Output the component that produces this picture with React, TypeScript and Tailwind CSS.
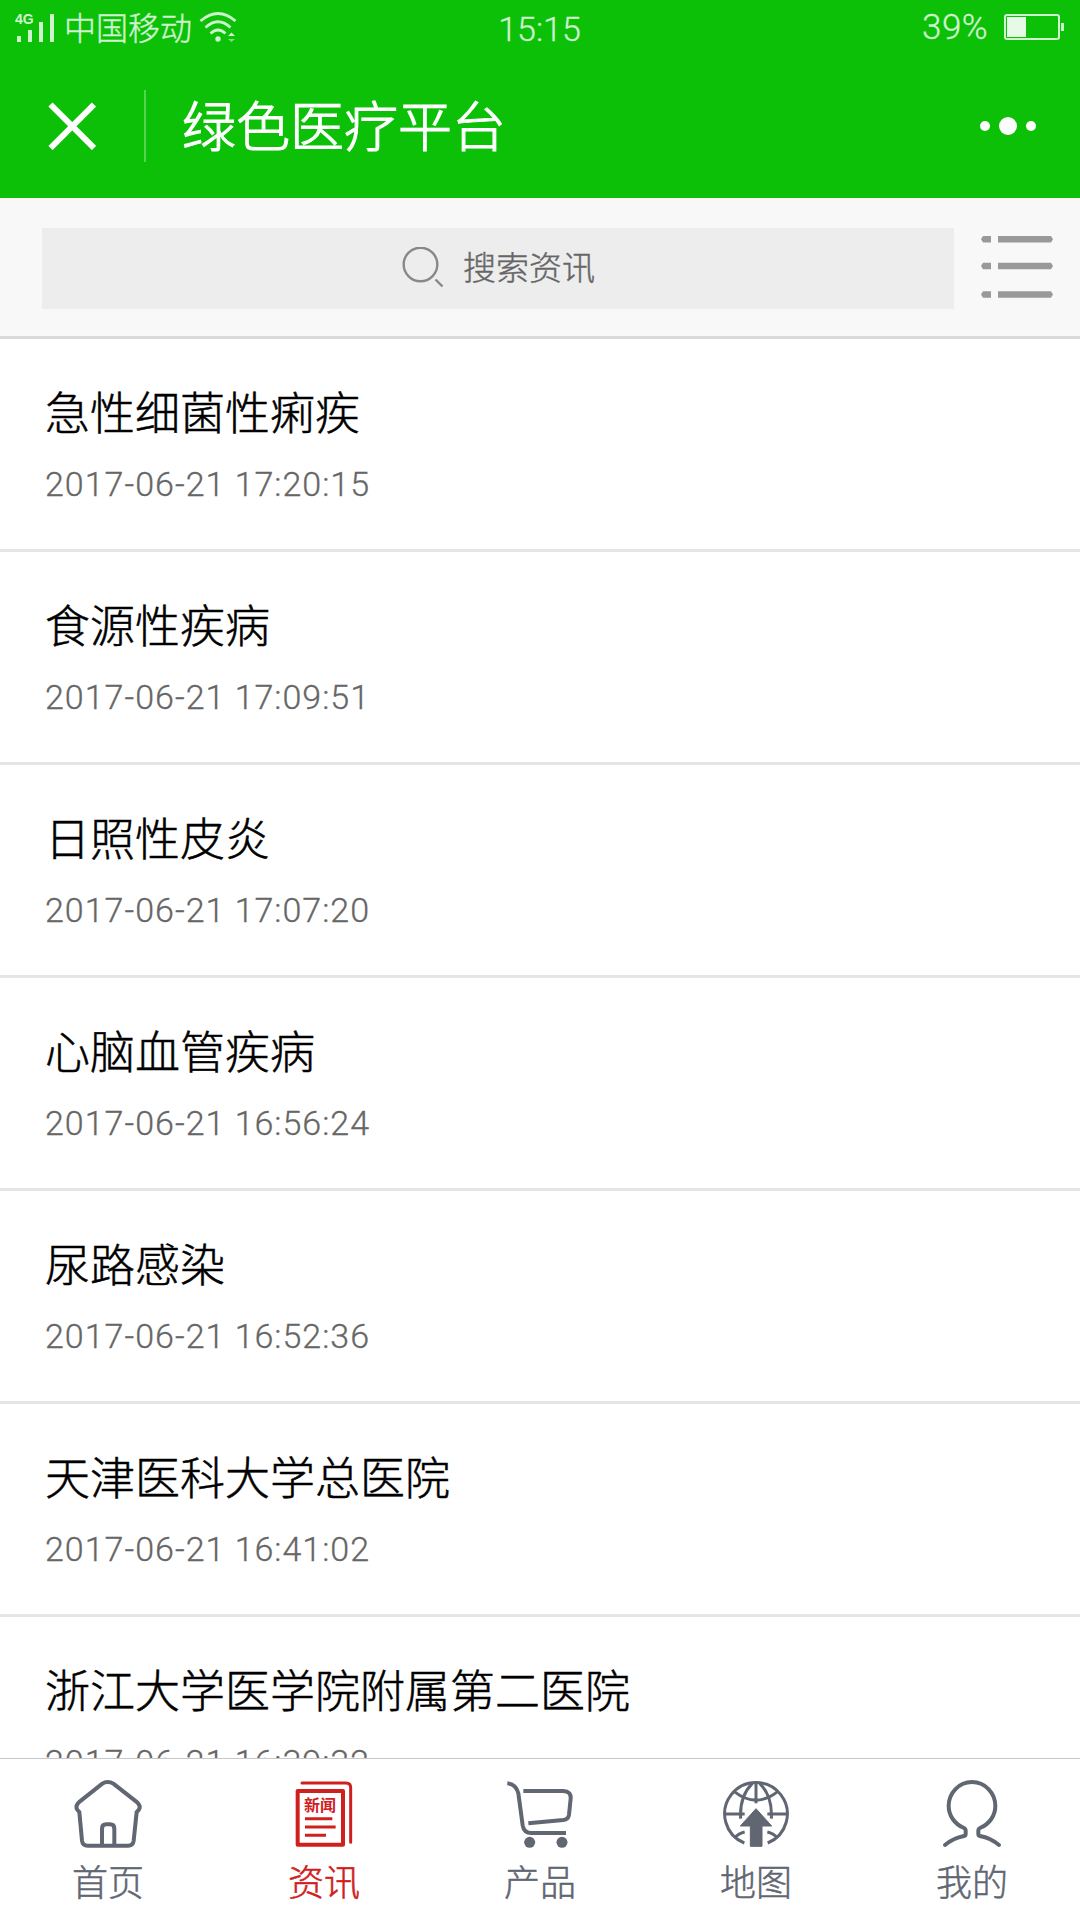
import { useState } from 'react';
import type { ReactNode } from 'react';
import { clsx } from 'clsx';

interface Article {
  title: string;
  date: string;
}

const ARTICLES: Article[] = [
  { title: '急性细菌性痢疾', date: '2017-06-21 17:20:15' },
  { title: '食源性疾病', date: '2017-06-21 17:09:51' },
  { title: '日照性皮炎', date: '2017-06-21 17:07:20' },
  { title: '心脑血管疾病', date: '2017-06-21 16:56:24' },
  { title: '尿路感染', date: '2017-06-21 16:52:36' },
  { title: '天津医科大学总医院', date: '2017-06-21 16:41:02' },
  { title: '浙江大学医学院附属第二医院', date: '2017-06-21 16:39:32' },
];

function TabIcon({ children }: { children: ReactNode }) {
  return (
    <svg
      className="block size-[72px]"
      viewBox="0 0 216 216"
      fill="none"
      stroke="currentColor"
      strokeWidth={12}
      strokeLinejoin="round"
    >
      {children}
    </svg>
  );
}

const TABS = [
  {
    id: 'home',
    label: '首页',
    icon: (
      <TabIcon>
        <path d="M107 12q-9 0-16 5L24 70C10 82 10 92 22 102L30 188Q32 203 47 203H168Q183 203 185 188L194 102C207 92 206 82 192 70L124 17Q116 12 107 12Z" />
        <path d="M90 203V152q0-13 13-13h11q13 0 13 13v51" />
      </TabIcon>
    ),
  },
  {
    id: 'news',
    label: '资讯',
    icon: (
      <TabIcon>
        <rect x="29" y="39" width="136" height="161" strokeWidth={12} />
        <path d="M42 15H174Q188 15 188 29V193" strokeWidth={9} strokeLinecap="round" />
        <path d="M51 122H133M51 147H143M51 172H114" strokeWidth={9} />
        <text
          x="48"
          y="99"
          fontSize="48"
          fontWeight="700"
          fill="currentColor"
          stroke="none"
        >
          新闻
        </text>
      </TabIcon>
    ),
  },
  {
    id: 'products',
    label: '产品',
    icon: (
      <TabIcon>
        <path d="M10 16Q36 18 43 46L56 142Q60 165 82 165H186" strokeWidth={12} />
        <path d="M58 39H178Q202 40 200 62L195 110Q193 124 178 126L73 136" strokeWidth={12} />
        <circle cx="77" cy="193" r="16.5" fill="currentColor" stroke="none" />
        <circle cx="174" cy="193" r="16.5" fill="currentColor" stroke="none" />
      </TabIcon>
    ),
  },
  {
    id: 'map',
    label: '地图',
    icon: (
      <TabIcon>
        <g strokeWidth={9}>
          <path d="M73 195A94 94 0 1 1 143 195" />
          <path d="M15 108H74M142 108H201M108 14V76" />
          <path d="M97 16Q58 55 62 122M119 16Q158 55 154 122" />
          <path d="M43 41Q108 92 173 41" />
          <path d="M43 180Q56 166 74 162M173 180Q160 166 142 162" />
        </g>
        <path
          d="M108 92L61 144H91V205H126V144H155Z"
          fill="currentColor"
          strokeWidth={3}
        />
      </TabIcon>
    ),
  },
  {
    id: 'mine',
    label: '我的',
    icon: (
      <TabIcon>
        <path
          d="M27 201Q52 180 84 174Q89 173 89 167V157Q89 153 84 150C55 138 38 112 38 84A70 72 0 0 1 178 84C178 112 161 138 132 150Q127 153 127 157V167Q127 173 132 174Q164 180 189 201"
          strokeLinecap="round"
        />
      </TabIcon>
    ),
  },
];

function StatusBar() {
  return (
    <div className="flex h-[54px] items-center pl-[15px] pr-4 text-[#d0f3cf]">
      <div className="flex flex-1 items-center">
        <svg className="block h-[32px] w-[42px]" viewBox="0 0 42 32" fill="currentColor">
          <text x="0" y="13" fontSize="14" fontWeight="700" fontFamily="Liberation Sans, sans-serif">
            4G
          </text>
          <path d="M2 25h4v6H2zM13 19h4v12h-4zM24 11h4v20h-4zM35 3h4v28h-4z" />
        </svg>
        <span className="ml-[7px] pb-[3px] text-[32px] leading-none font-light [-webkit-text-stroke:0.4px_currentColor]">
          中国移动
        </span>
        <svg
          className="ml-[7px] block h-[32px] w-[40px]"
          viewBox="0 0 40 32"
          fill="none"
          stroke="currentColor"
          strokeWidth={2.8}
        >
          <path d="M1.5 10Q19 -5 36.500 10M6.500 16.500Q19 5 31.500 16.500M11.500 22.500Q19 15.500 26.500 22.500" />
          <circle cx="19" cy="28" r="2.700" fill="currentColor" stroke="none" />
          <path d="M29 25l3.500-3.500L36 25z" fill="currentColor" stroke="none" />
          <path d="M29 28l3.500 3L36 28z" fill="currentColor" stroke="none" opacity={0.6} />
        </svg>
      </div>
      <span className="pt-[4px] font-['Roboto'] text-[34px] leading-none font-light [-webkit-text-stroke:0.3px_currentColor]">
        15:15
      </span>
      <div className="flex flex-1 items-center justify-end gap-4">
        <span className="pt-px font-['Roboto'] text-[35px] leading-none font-light tracking-[0.4px] [-webkit-text-stroke:0.3px_currentColor]">
          39%
        </span>
        <div className="flex items-center gap-px">
          <div className="h-[26px] w-[56px] rounded-[3px] border-2 border-current p-px">
            <div className="h-full w-[19px] bg-[#e7fae7]" />
          </div>
          <div className="h-2 w-[3px] bg-current" />
        </div>
      </div>
    </div>
  );
}

function Header() {
  return (
    <header className="h-[198px] shrink-0 bg-[#0cc008] text-white">
      <StatusBar />
      <div className="flex h-36 items-center pr-11 pl-12">
        <button aria-label="关闭">
          <svg className="block size-12" viewBox="0 0 48 48" stroke="currentColor" strokeWidth={6}>
            <path d="M2.500 2.500L46 46M46 2.500L2.500 46" />
          </svg>
        </button>
        <div className="ml-12 h-[72px] w-[2px] bg-white/30" />
        <h1 className="ml-9 flex-1 pb-[5px] text-[54px] leading-none font-light [-webkit-text-stroke:1.1px_currentColor]">
          绿色医疗平台
        </h1>
        <button className="flex items-center gap-[9px]" aria-label="更多">
          <span className="size-[10px] rounded-full bg-white" />
          <span className="size-[18px] rounded-full bg-white" />
          <span className="size-[10px] rounded-full bg-white" />
        </button>
      </div>
    </header>
  );
}

function SearchBar() {
  return (
    <div className="flex h-[141px] shrink-0 items-start border-b-[3px] border-[#d9d9d9] bg-[#f8f8f8] pt-[30px] pr-[27px] pl-[42px]">
      <div className="flex h-[81px] w-[912px] items-center justify-center bg-[#ededed] pl-px text-[#666]">
        <svg
          className="mb-[2px] block size-[42px]"
          viewBox="0 0 42 42"
          fill="none"
          stroke="#888"
          strokeWidth={2.4}
        >
          <circle cx="18.500" cy="17.500" r="16.800" />
          <path d="M33.500 32.500l7 7" />
        </svg>
        <span className="ml-[19px] pb-[5px] text-[33px] leading-none font-light [-webkit-text-stroke:0.4px_currentColor]">
          搜索资讯
        </span>
      </div>
      <button className="mt-[7px] ml-[27px]" aria-label="分类">
        <svg className="block h-[64px] w-[72px]" viewBox="0 0 72 64" fill="#999">
          <path d="M2 1H10V7.500H2L0 4.200zM2 27.700H10V34.200H2L0 31zM2 56.300H10V62.800H2L0 59.500z" />
          <path d="M17 1H70L72 4.200L70 7.500H17zM17 27.700H70L72 31L70 34.200H17zM17 56.300H70L72 59.500L70 62.800H17z" />
        </svg>
      </button>
    </div>
  );
}

export default function App() {
  const [activeTab, setActiveTab] = useState('news');

  return (
    <div className="flex h-[1920px] w-[1080px] flex-col overflow-hidden bg-white font-['Noto_Sans_CJK_SC',sans-serif]">
      <Header />
      <SearchBar />

      {/* Article list */}
      <main className="min-h-0 flex-1 overflow-hidden">
        {ARTICLES.map((article) => (
          <article
            key={article.title}
            className="h-[213px] border-b-[3px] border-[#e5e5e5] pt-[47px] pl-[45px]"
          >
            <h2 className="text-[45px] leading-[50px] font-light text-black [-webkit-text-stroke:0.5px_currentColor]">
              {article.title}
            </h2>
            <p className="mt-[28px] font-['Roboto'] text-[34px] leading-[40px] font-light tracking-[1px] text-[#666] [-webkit-text-stroke:0.3px_currentColor]">
              {article.date}
            </p>
          </article>
        ))}
      </main>

      {/* Bottom tabs */}
      <nav className="grid h-[162px] shrink-0 grid-cols-5 border-t border-[#c8c8c8] bg-white">
        {TABS.map((tab) => (
          <button
            key={tab.id}
            onClick={() => setActiveTab(tab.id)}
            className={clsx(
              'flex flex-col items-center pt-[19px]',
              activeTab === tab.id ? 'text-[#cf201d]' : 'text-[#606672]'
            )}
          >
            {tab.icon}
            <span className="mt-[10px] text-[36px] leading-[40px] font-light [-webkit-text-stroke:0.5px_currentColor]">
              {tab.label}
            </span>
          </button>
        ))}
      </nav>
    </div>
  );
}
